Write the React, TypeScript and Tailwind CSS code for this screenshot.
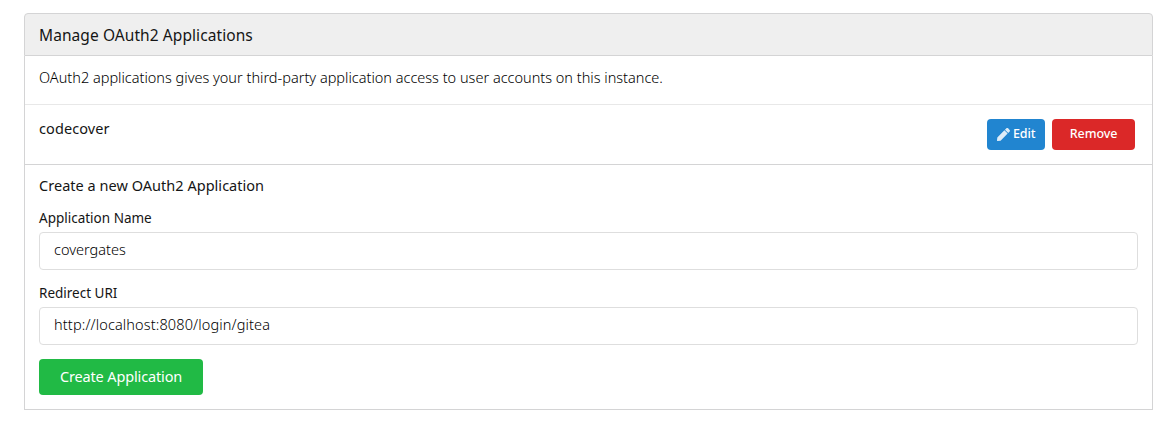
import { FaPen } from "react-icons/fa";

function Field({ id, label, value, valueClass }: { id: string; label: string; value: string; valueClass: string }) {
  return (
    <div className="mb-[14px]">
      <label htmlFor={id} className="mb-1 block h-[19px] text-[13.5px] font-[450] leading-[19px]">
        {label}
      </label>
      <input
        id={id}
        defaultValue={value}
        className={`block h-[38px] w-full rounded border border-[#dedede] bg-white px-[14px] pb-[4px] text-[14.5px] font-light text-black outline-none ${valueClass}`}
      />
    </div>
  );
}

export default function App() {
  return (
    <main className="h-[430px] bg-white pl-6 pr-[10px] pt-[13px] font-['Noto_Sans','Open_Sans',sans-serif] text-[#151515]">
      <h4 className="flex h-[43px] items-center rounded-t border border-[#d4d4d5] bg-[#efefef] px-[14px] pt-[2px] text-[15.5px] font-[450] tracking-[0.08px]">
        Manage OAuth2 Applications
      </h4>
      <section className="border-x border-b border-[#d4d4d5]">
        <p className="h-[48px] px-[14px] pt-[11px] text-[14.5px] font-light leading-5 text-black">
          OAuth2 applications gives your third-party application access to user accounts on this instance.
        </p>
        <div className="flex h-[60px] items-start border-t border-[#e8e8e8] pl-[14px] pr-[17px] pt-[14px]">
          <span className="-mt-px text-[14.5px] font-[450] leading-5 tracking-[0.1px]">codecover</span>
          <div className="ml-auto flex gap-[7px]">
            <button className="flex h-[31px] w-[58px] items-center rounded bg-[#2185d0] pb-px pl-[10px] text-[12.5px] font-medium tracking-[-0.1px] text-white">
              <FaPen className="mr-[3px] size-[13px] opacity-85" />
              Edit
            </button>
            <button className="h-[31px] w-[83px] rounded bg-[#db2828] pb-px text-[12.5px] font-medium tracking-[-0.1px] text-white">
              Remove
            </button>
          </div>
        </div>
      </section>
      <section className="h-[245px] border-x border-b border-[#d4d4d5] px-[14px] pt-[10px]">
        <h5 className="mb-[14px] h-5 text-[14.5px] font-[450] leading-5 tracking-[0.03px]">Create a new OAuth2 Application</h5>
        <form>
          <Field id="name" label="Application Name" value="covergates" valueClass="tracking-normal" />
          <Field id="uri" label="Redirect URI" value="http://localhost:8080/login/gitea" valueClass="tracking-[0.13px]" />
          <button type="button" className="h-9 w-[164px] rounded bg-[#21ba45] pb-px text-[14.5px] tracking-[-0.14px] text-white">
            Create Application
          </button>
        </form>
      </section>
    </main>
  );
}
